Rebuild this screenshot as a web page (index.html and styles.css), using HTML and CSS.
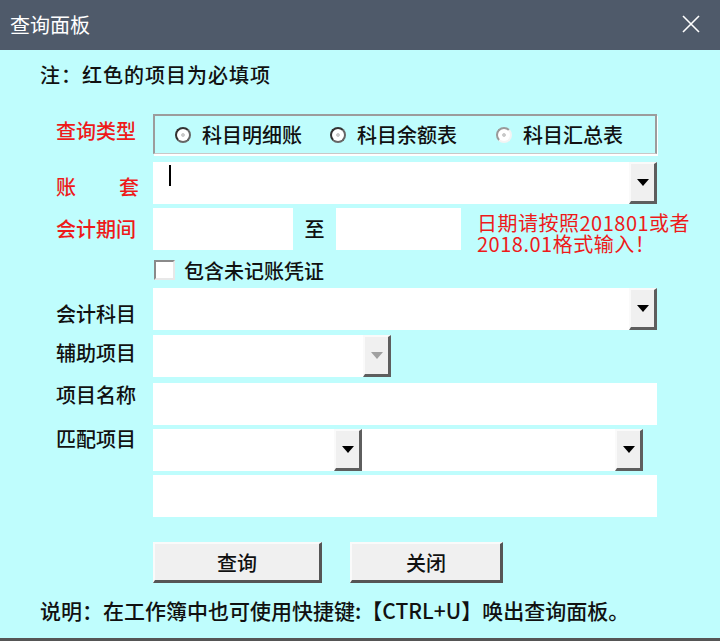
FILE: index.html
```html
<!DOCTYPE html>
<html lang="zh-CN">

<head>
    <meta charset="UTF-8">
    <title>查询面板</title>
    <link rel="stylesheet" href="styles.css">
</head>

<body>
    <div class="window">
        <div class="titlebar">
            <span class="title">查询面板</span>
            <svg class="close" width="20" height="20" viewBox="0 0 20 20">
                <path d="M2 2 L18 18 M18 2 L2 18" stroke="#fff" stroke-width="1.6" fill="none" />
            </svg>
        </div>

        <div class="panel">
            <p class="note">注：红色的项目为必填项</p>

            <div class="form">
                <div class="row row-type">
                    <span class="lbl req">查询类型</span>
                    <div class="groupbox">
                        <label class="opt"><span class="radio"></span>科目明细账</label>
                        <label class="opt"><span class="radio"></span>科目余额表</label>
                        <label class="opt"><span class="radio dim"></span>科目汇总表</label>
                    </div>
                </div>

                <div class="row row-book">
                    <span class="lbl req spread"><span>账</span><span>套</span></span>
                    <div class="field grow"><span class="caret"></span></div>
                    <span class="drop"><i></i></span>
                </div>

                <div class="row row-period">
                    <span class="lbl req">会计期间</span>
                    <div class="field from"></div>
                    <span class="to">至</span>
                    <div class="field until"></div>
                    <p class="hint">
                        <span>日期请按照201801或者</span>
                        <span>2018.01格式输入！</span>
                    </p>
                </div>

                <div class="row row-check">
                    <span class="lbl"></span>
                    <span class="check"></span>
                    <span class="check-text">包含未记账凭证</span>
                </div>

                <div class="row row-account">
                    <span class="lbl">会计科目</span>
                    <div class="field grow"></div>
                    <span class="drop"><i></i></span>
                </div>

                <div class="row row-aux">
                    <span class="lbl">辅助项目</span>
                    <div class="field aux"></div>
                    <span class="drop off"><i></i></span>
                </div>

                <div class="row row-name">
                    <span class="lbl">项目名称</span>
                    <div class="field grow"></div>
                </div>

                <div class="row row-match">
                    <span class="lbl">匹配项目</span>
                    <div class="field match-a"></div>
                    <span class="drop"><i></i></span>
                    <div class="field match-b"></div>
                    <span class="drop"><i></i></span>
                </div>

                <div class="row row-extra">
                    <span class="lbl"></span>
                    <div class="field grow"></div>
                </div>
            </div>

            <div class="actions">
                <button class="btn btn-query">查询</button>
                <button class="btn btn-close">关闭</button>
            </div>

            <p class="footer">说明：在工作簿中也可使用快捷键:【CTRL+U】唤出查询面板。</p>
        </div>
    </div>
</body>

</html>
```

FILE: styles.css
```css
body {
    margin: 0;
    padding: 0;
    font-family: "Noto Sans CJK SC", "Liberation Sans", sans-serif;
    color: #111;
}

.window {
    width: 720px;
    height: 641px;
    display: flex;
    flex-direction: column;
    background: #bffdfd;
}

/* title bar */
.titlebar {
    height: 50px;
    flex: none;
    background: #4f5a6a;
    display: flex;
    align-items: center;
    justify-content: space-between;
    padding: 0 19px 0 10px;
}

.title {
    color: #fff;
    font-size: 20px;
    line-height: 24px;
}

.close {
    display: block;
    margin-top: -2px;
}

/* body */
.panel {
    flex: 1;
    padding: 13px 0 0 40px;
    border-bottom: 3px solid #555;
}

.note {
    margin: 0;
    font-size: 20px;
    line-height: 24px;
    font-weight: 500;
    letter-spacing: 1px;
}

.form {
    margin: 27px 0 0 16px;
    display: flex;
    flex-direction: column;
}

.row {
    display: flex;
    height: 42px;
}

.lbl {
    width: 97px;
    flex: none;
    font-size: 20px;
    line-height: 20px;
    font-weight: 500;
    box-sizing: border-box;
}

.lbl.req {
    color: #ee1a1a;
}

.spread {
    display: flex;
    justify-content: space-between;
    padding-right: 14px;
}

/* option group */
.row-type {
    height: 40px;
}

.row-type .lbl {
    padding-top: 7px;
}

.groupbox {
    width: 504px;
    box-sizing: border-box;
    border-top: 2px solid #9c9c9c;
    border-left: 2px solid #9c9c9c;
    border-right: 2px solid #9c9c9c;
    border-bottom: 1px solid #c8c8c8;
    box-shadow: 1px 2px 0 #fff;
    display: grid;
    grid-template-columns: 155px 166px auto;
    align-items: center;
    padding-left: 20px;
}

.opt {
    display: flex;
    align-items: center;
    gap: 11px;
    font-size: 20px;
    line-height: 24px;
    font-weight: 500;
}

.radio {
    width: 16px;
    height: 16px;
    box-sizing: border-box;
    border-radius: 50%;
    border: 2.5px solid;
    border-color: #333 #666 #666 #333;
    background: radial-gradient(circle, #c8c8c8 0 1.5px, #fff 2.2px);
}

.radio.dim {
    border-color: #9a9a9a #f4f4f4 #f4f4f4 #9a9a9a;
}

/* inputs */
.field {
    height: 42px;
    background: #fff;
    flex: none;
}

.field.grow {
    flex: 1;
    max-width: 504px;
}

.row-book .field.grow,
.row-account .field.grow {
    max-width: 476px;
}

.caret {
    display: block;
    width: 2px;
    height: 21px;
    background: #000;
    margin: 3px 0 0 16px;
}

.drop {
    width: 28px;
    height: 42px;
    flex: none;
    box-sizing: border-box;
    background: #f0f0f0;
    border-top: 2px solid #fafafa;
    border-left: 2px solid #fafafa;
    border-right: 3px solid #5e5e5e;
    border-bottom: 3px solid #5e5e5e;
    display: flex;
    align-items: center;
    justify-content: center;
}

.drop i {
    width: 0;
    height: 0;
    border-left: 6px solid transparent;
    border-right: 6px solid transparent;
    border-top: 7px solid #000;
}

.drop.off i {
    border-top-color: #a0a0a0;
}

.row-book {
    margin-top: 8px;
}

.row-book .lbl {
    padding-top: 15px;
}

.row-period {
    margin-top: 4px;
}

.row-period .lbl {
    padding-top: 11px;
}

.from {
    width: 140px;
}

.to {
    width: 43px;
    flex: none;
    font-size: 20px;
    line-height: 42px;
    font-weight: 500;
    text-align: center;
}

.until {
    width: 125px;
}

.hint {
    margin: 4px 0 0 16px;
    color: #ee1a1a;
    font-size: 20px;
    white-space: nowrap;
    letter-spacing: 0.5px;
}

.hint span {
    display: block;
    height: 21px;
    line-height: 21px;
}

/* checkbox */
.row-check {
    height: 38px;
}

.check {
    width: 21px;
    height: 20px;
    box-sizing: border-box;
    margin: 10px 0 0 1px;
    background: #fff;
    border: 2px solid;
    border-color: #8a8a8a #e8e8e8 #e8e8e8 #8a8a8a;
}

.check-text {
    margin: 9px 0 0 9px;
    font-size: 20px;
    line-height: 24px;
    font-weight: 500;
}

.row-account .lbl {
    padding-top: 16px;
}

.row-aux {
    margin-top: 5px;
}

.row-aux .lbl {
    padding-top: 8px;
}

.aux {
    width: 210px;
}

.row-name {
    margin-top: 6px;
}

.row-name .lbl {
    padding-top: 2px;
}

.row-match {
    margin-top: 4px;
}

.match-a {
    width: 181px;
}

.match-b {
    width: 253px;
}

.row-extra {
    margin-top: 4px;
}

/* buttons */
.actions {
    margin: 25px 0 0 113px;
    display: flex;
    gap: 28px;
}

.btn {
    height: 41px;
    box-sizing: border-box;
    background: #f0f0f0;
    border-top: 2px solid #fafafa;
    border-left: 2px solid #fafafa;
    border-right: 3px solid #555;
    border-bottom: 3px solid #555;
    font-family: inherit;
    font-size: 20px;
    font-weight: 500;
    color: #111;
    padding: 0;
}

.btn-query {
    width: 169px;
}

.btn-close {
    width: 153px;
}

.footer {
    margin: 15px 0 0;
    font-size: 21px;
    line-height: 24px;
    font-weight: 500;
}
```
